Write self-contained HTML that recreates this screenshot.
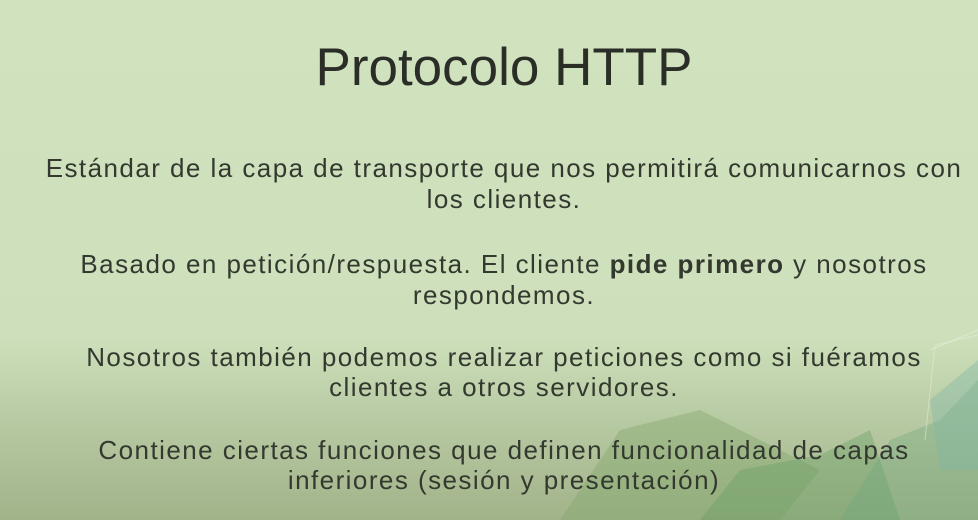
<!DOCTYPE html>
<html><head><meta charset="utf-8"><style>
html,body{margin:0;padding:0;}
body{width:978px;height:520px;overflow:hidden;position:relative;
background:linear-gradient(180deg,#d0e2be 0%,#cde0bb 65%,#b9cba4 80%,#a2b38a 100%);
font-family:"Liberation Sans",sans-serif;color:#34392f;}
.t{position:absolute;left:15px;width:978px;text-align:center;white-space:nowrap;}
h1{position:absolute;top:37px;left:15px;width:978px;text-align:center;margin:0;font-weight:normal;font-size:53px;color:#2a2e27;}
.l{font-size:26px;letter-spacing:1.45px;}
svg{position:absolute;left:0;top:0;}
</style></head><body>
<svg width="978" height="520">
<polygon points="560,520 620,430 700,410 760,440 820,470 780,520" fill="#7fa56a" opacity="0.4"/>
<polygon points="700,520 740,470 820,455 870,430 900,520" fill="#5e9a5f" opacity="0.35"/>
<polygon points="840,520 890,440 940,420 978,380 978,520" fill="#6da77d" opacity="0.35"/>
<polygon points="930,400 978,360 978,470 940,470" fill="#80b7a5" opacity="0.4"/>
<polyline points="930,350 978,330" stroke="#e8f0df" fill="none" opacity="0.6"/>
<polyline points="925,440 935,345 978,335" stroke="#e8f0df" fill="none" opacity="0.5"/>
</svg>
<h1>Protocolo HTTP</h1>
<div class="t l" style="top:153px">Estándar de la capa de transporte que nos permitirá comunicarnos con</div>
<div class="t l" style="top:184px">los clientes.</div>
<div class="t l" style="top:249px">Basado en petición/respuesta. El cliente <b>pide primero</b> y nosotros</div>
<div class="t l" style="top:280px">respondemos.</div>
<div class="t l" style="top:342px">Nosotros también podemos realizar peticiones como si fuéramos</div>
<div class="t l" style="top:372px">clientes a otros servidores.</div>
<div class="t l" style="top:435px">Contiene ciertas funciones que definen funcionalidad de capas</div>
<div class="t l" style="top:465px">inferiores (sesión y presentación)</div>
</body></html>
